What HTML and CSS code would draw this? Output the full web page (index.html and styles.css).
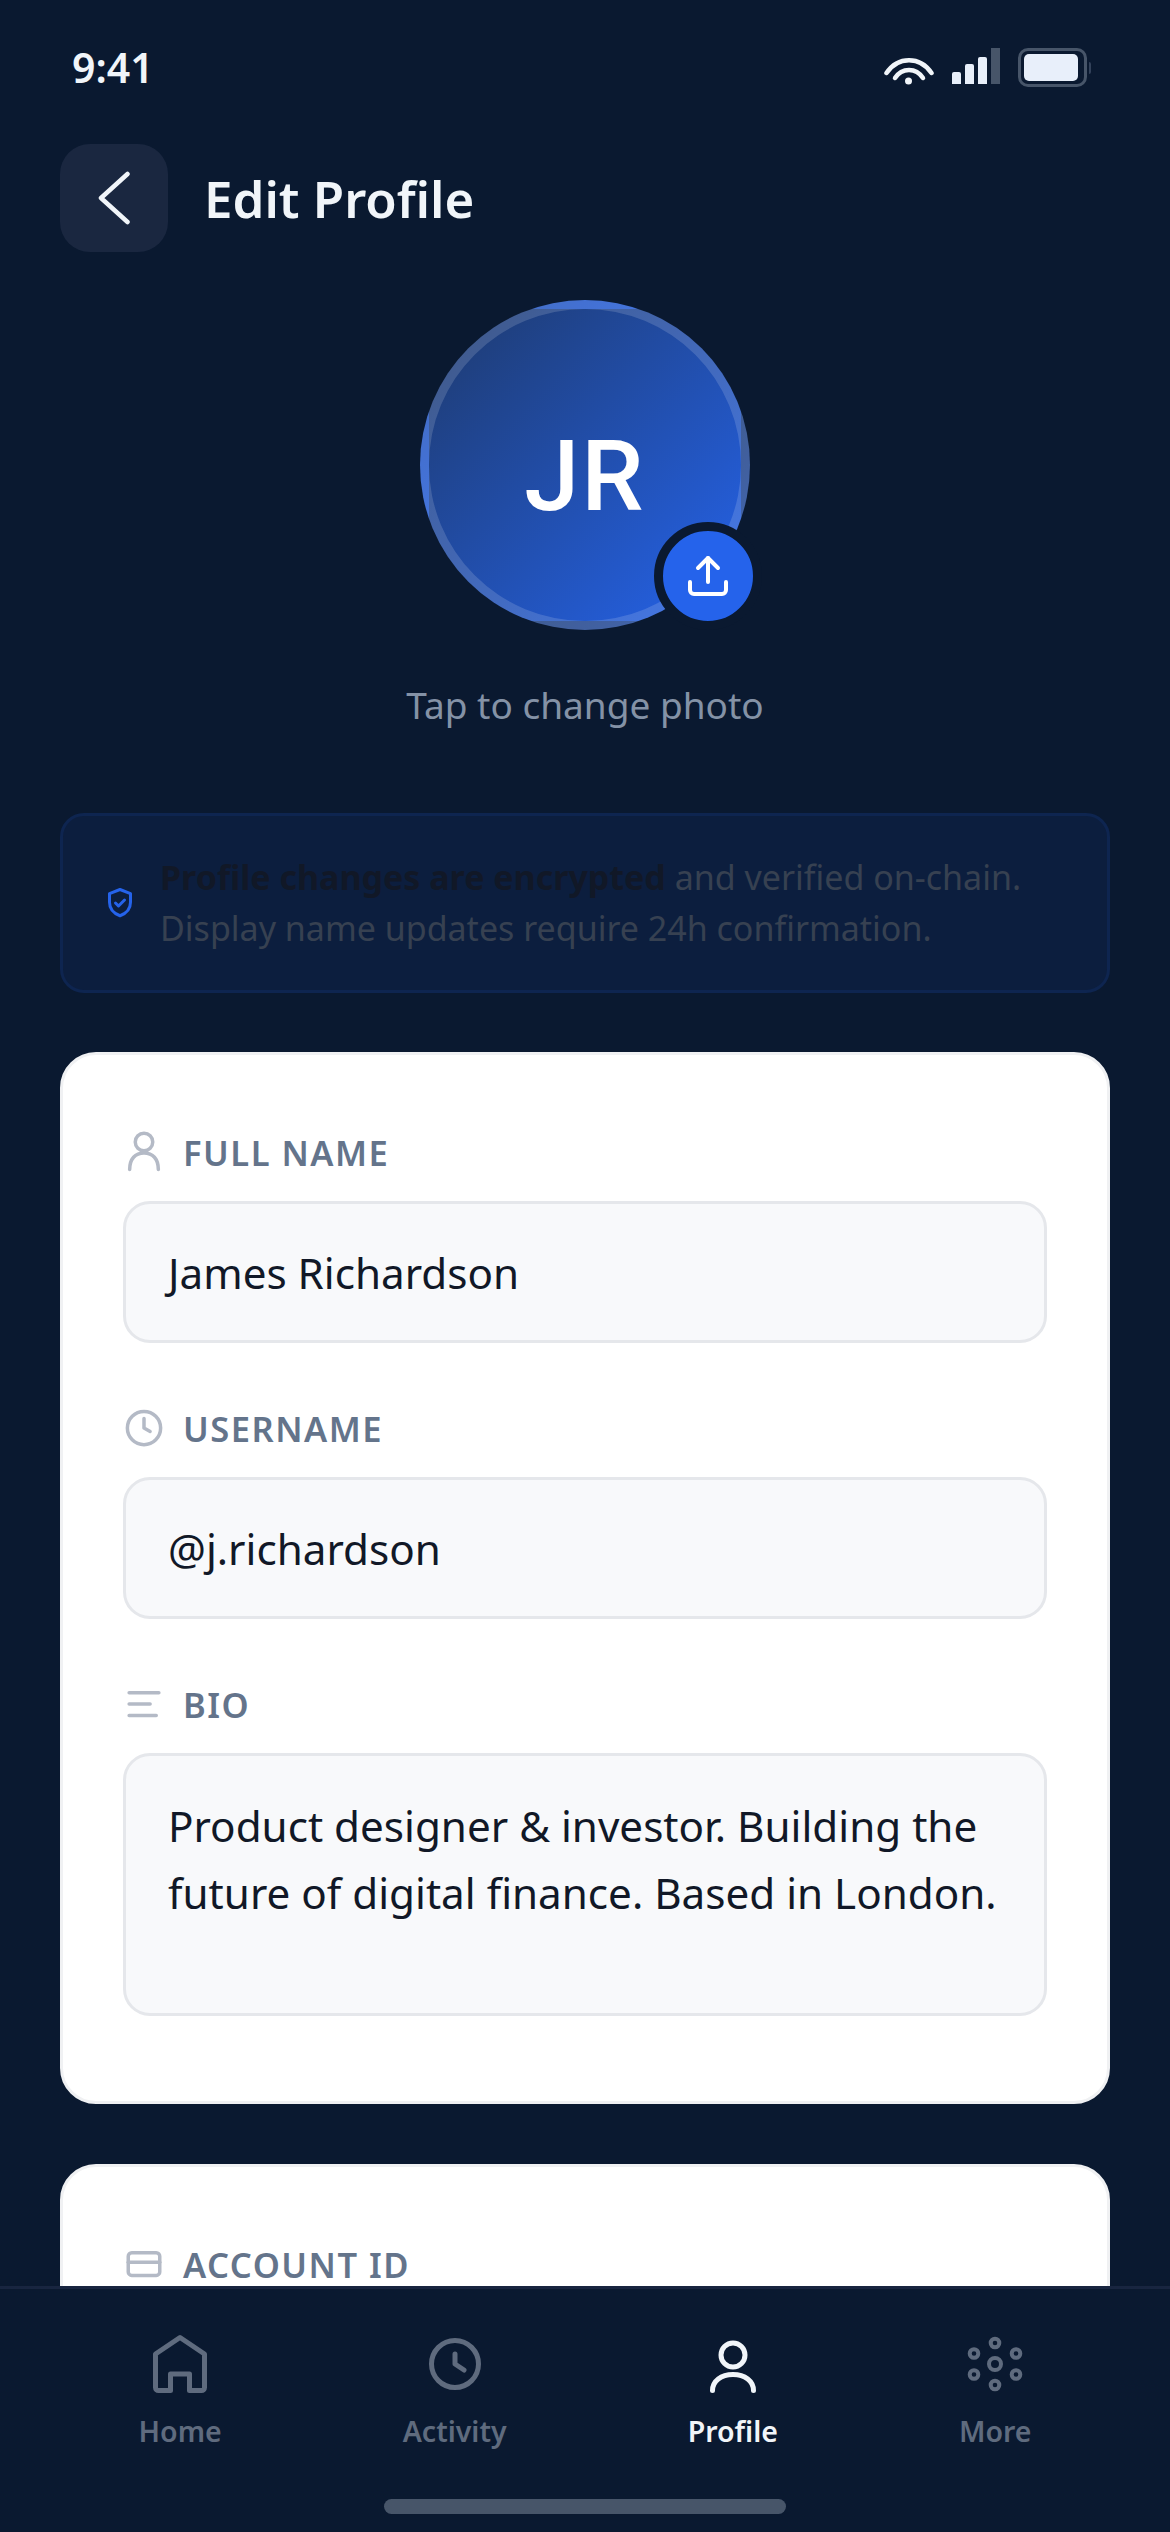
FILE: index.html
```html
<!DOCTYPE html>
<html lang="en">
<head>
  <meta charset="UTF-8">
  <meta name="viewport" content="width=device-width, initial-scale=1.0">
  <title>Edit Profile</title>
  <link rel="stylesheet" href="styles.css">
</head>
<body>
  <div class="screen">
    <div class="status-bar">
      <span class="time">9:41</span>
      <div class="status-icons">
        <svg class="wifi" viewBox="0 0 50 28" fill="none" stroke="#f1f5f9" stroke-width="4.500" stroke-linecap="round">
          <path d="M2.500 16C14 -1 36 -1 47.500 16"/>
          <path d="M11 21C18 10.300 32 10.300 39 21"/>
          <circle cx="24.500" cy="24" r="3.500" fill="#f1f5f9" stroke="none"/>
        </svg>
        <div class="signal">
          <span class="bar bar-1"></span>
          <span class="bar bar-2"></span>
          <span class="bar bar-3"></span>
          <span class="bar bar-4"></span>
        </div>
        <div class="battery"><span class="battery-fill"></span></div>
        <span class="battery-cap"></span>
      </div>
    </div>

    <div class="header">
      <div class="back-btn">
        <svg width="32" height="54" viewBox="0 0 32 54" fill="none" stroke="#f1f5f9" stroke-width="4.500" stroke-linecap="round" stroke-linejoin="round">
          <path d="M29.500 3 3 27l26.500 24"/>
        </svg>
      </div>
      <h1>Edit Profile</h1>
    </div>

    <div class="content">
      <div class="avatar-block">
        <div class="avatar">
          <span class="initials">JR</span>
          <div class="avatar-badge">
            <svg width="48" height="48" viewBox="0 0 24 24" fill="none" stroke="white" stroke-width="2" stroke-linecap="round" stroke-linejoin="round">
              <path d="M3 15v4a2 2 0 0 0 2 2h14a2 2 0 0 0 2-2v-4"/>
              <path d="M17 8l-5-5-5 5"/>
              <path d="M12 3v12"/>
            </svg>
          </div>
        </div>
        <p class="avatar-hint">Tap to change photo</p>
      </div>

      <div class="notice">
        <svg class="notice-icon" width="36" height="36" viewBox="0 0 24 24" fill="none" stroke="#2563eb" stroke-width="2" stroke-linecap="round" stroke-linejoin="round">
          <path d="M12 3l7 2.700v5.800c0 4.500-3 7.500-7 9-4-1.500-7-4.500-7-9V5.700z"/>
          <path d="m9 12 2 2 4-4"/>
        </svg>
        <p><strong>Profile changes are encrypted</strong> and verified on-chain. Display name updates require 24h confirmation.</p>
      </div>

      <div class="card">
        <div class="field">
          <label class="field-label">
            <svg class="field-icon" viewBox="0 0 24 24"><circle cx="12" cy="6.300" r="5"/><path d="M3.800 22C3.800 16 7 12.500 12 12.500S20.200 16 20.200 22"/></svg>
            Full Name
          </label>
          <div class="input">James Richardson</div>
        </div>
        <div class="field">
          <label class="field-label">
            <svg class="field-icon" viewBox="0 0 24 24"><circle cx="12" cy="12" r="9.500"/><path d="M12 6.500V12l3.500 2"/></svg>
            Username
          </label>
          <div class="input">@j.richardson</div>
        </div>
        <div class="field">
          <label class="field-label">
            <svg class="field-icon" viewBox="0 0 24 24"><path d="M3.500 5.500h17M3.500 12h12M3.500 18.500H19"/></svg>
            Bio
          </label>
          <div class="input input-area">Product designer &amp; investor. Building the future of digital finance. Based in London.</div>
        </div>
      </div>

      <div class="card">
        <div class="field">
          <label class="field-label">
            <svg class="field-icon" viewBox="0 0 24 24"><rect x="3" y="5.500" width="18" height="13" rx="2"/><path d="M3 11h18"/></svg>
            Account ID
          </label>
          <div class="input"></div>
        </div>
      </div>
    </div>

    <div class="tab-bar">
      <div class="tabs">
        <div class="tab">
          <svg class="tab-icon" viewBox="0 0 72 72"><path d="M36 9.500 60.500 26v33.500a3 3 0 0 1-3 3h-12V46h-19v16.500h-12a3 3 0 0 1-3-3V26z"/></svg>
          <span>Home</span>
        </div>
        <div class="tab">
          <svg class="tab-icon" viewBox="0 0 72 72"><circle cx="36" cy="36" r="23.500"/><path d="M36 26v10l9 6"/></svg>
          <span>Activity</span>
        </div>
        <div class="tab tab-active">
          <svg class="tab-icon" viewBox="0 0 72 72"><circle cx="36" cy="27" r="12"/><path d="M15.500 62.500C15.500 53 24 46.500 36 46.500S56.500 53 56.500 62.500"/></svg>
          <span>Profile</span>
        </div>
        <div class="tab">
          <svg class="tab-icon tab-icon-dots" viewBox="0 0 72 72">
            <circle cx="36" cy="36" r="6"/>
            <circle cx="36" cy="15" r="4.300"/><circle cx="36" cy="57" r="4.300"/>
            <circle cx="15" cy="25.500" r="4.300"/><circle cx="57" cy="25.500" r="4.300"/>
            <circle cx="15" cy="46.500" r="4.300"/><circle cx="57" cy="46.500" r="4.300"/>
          </svg>
          <span>More</span>
        </div>
      </div>
      <div class="home-indicator"></div>
    </div>
  </div>
</body>
</html>
```

FILE: styles.css
```css
* {
  box-sizing: border-box;
}

body {
  margin: 0;
  background-color: #0a1930;
  font-family: 'Noto Sans', 'Open Sans', sans-serif;
}

.screen {
  width: 1170px;
  height: 2532px;
  display: flex;
  flex-direction: column;
  overflow: hidden;
  background-color: #0a1930;
}

.status-bar {
  height: 144px;
  flex-shrink: 0;
  display: flex;
  justify-content: space-between;
  align-items: flex-start;
  padding: 42px 79px 0 72px;
}

.time {
  font-size: 41px;
  line-height: 50px;
  font-weight: 600;
  color: #f1f5f9;
}

.status-icons {
  display: flex;
  align-items: flex-start;
  padding-top: 6px;
}

.wifi {
  width: 50px;
  height: 28px;
  margin-top: 9px;
  margin-right: 18px;
}

.signal {
  display: flex;
  align-items: flex-end;
  gap: 4px;
  height: 36px;
  margin-right: 18px;
}

.bar {
  width: 9px;
  background-color: #e8effa;
  border-radius: 2px 2px 0 0;
}

.bar-1 { height: 12px; }
.bar-2 { height: 20px; }
.bar-3 { height: 27px; }
.bar-4 { height: 36px; background-color: #475569; border-radius: 0; }

.battery {
  width: 69px;
  height: 39px;
  padding: 3px 6px 3px 3px;
  border: 3px solid #475569;
  border-radius: 10px;
}

.battery-fill {
  display: block;
  height: 100%;
  background-color: #e8effa;
  border-radius: 5px;
}

.battery-cap {
  width: 2px;
  height: 12px;
  margin: 14px 0 0 2px;
  background-color: #33425a;
  border-radius: 0 2px 2px 0;
}

.header {
  flex-shrink: 0;
  display: flex;
  align-items: center;
  gap: 36px;
  padding: 0 60px;
}

.back-btn {
  width: 108px;
  height: 108px;
  display: flex;
  align-items: center;
  justify-content: center;
  background-color: #1a2740;
  border-radius: 30px;
}

h1 {
  margin: 0;
  font-size: 51px;
  font-weight: 600;
  color: #f1f5f9;
}

.content {
  flex: 1;
  min-height: 0;
  overflow: hidden;
  padding: 48px 60px 0;
}

.avatar-block {
  display: flex;
  flex-direction: column;
  align-items: center;
  margin-bottom: 82px;
}

.avatar {
  position: relative;
  width: 330px;
  height: 330px;
  display: flex;
  align-items: center;
  justify-content: center;
  border: 9px solid rgba(255, 255, 255, 0.15);
  border-radius: 50%;
  background: linear-gradient(135deg, #1e3a6e, #2563eb);
  color: white;
}

.initials {
  padding-top: 22px;
  font-family: Roboto, sans-serif;
  font-size: 99px;
  font-weight: 500;
  letter-spacing: 2px;
}

.avatar-badge {
  position: absolute;
  right: -21px;
  bottom: -9px;
  width: 108px;
  height: 108px;
  display: flex;
  align-items: center;
  justify-content: center;
  background-color: #2563eb;
  border: 9px solid #0a1930;
  border-radius: 50%;
}

.avatar-hint {
  margin: 49px 0 0;
  font-size: 37px;
  line-height: 52px;
  color: #8492a6;
}

.notice {
  height: 180px;
  display: flex;
  align-items: center;
  gap: 22px;
  padding: 0 48px 0 39px;
  margin-bottom: 59px;
  background-color: #0c1e3e;
  border: 3px solid #0e2550;
  border-radius: 24px;
}

.notice-icon {
  flex-shrink: 0;
}

.notice p {
  margin: 0;
  font-size: 34px;
  line-height: 51px;
  color: #374151;
}

.notice strong {
  color: #111827;
  font-weight: 700;
}

.card {
  background-color: white;
  border: 3px solid #f0f1f3;
  border-radius: 36px;
  padding: 67px 60px 30px;
  margin-bottom: 60px;
}

.field {
  margin-bottom: 55px;
}

.field-label {
  display: flex;
  align-items: center;
  gap: 18px;
  height: 60px;
  margin-bottom: 19px;
  font-size: 34.500px;
  font-weight: 600;
  letter-spacing: 1.500px;
  text-transform: uppercase;
  color: #64748b;
}

.field-icon {
  width: 42px;
  height: 42px;
  flex-shrink: 0;
  fill: none;
  stroke: #b4bac6;
  stroke-width: 2;
  stroke-linecap: round;
  stroke-linejoin: round;
}

.input {
  height: 142px;
  display: flex;
  align-items: center;
  padding: 0 40px 0 42px;
  background-color: #f8f9fb;
  border: 3px solid #e5e7eb;
  border-radius: 27px;
  font-size: 42.200px;
  color: #111827;
}

.input-area {
  height: 263px;
  align-items: flex-start;
  padding-top: 36px;
  line-height: 67px;
}

.tab-bar {
  height: 246px;
  flex-shrink: 0;
  display: flex;
  flex-direction: column;
  padding-top: 39px;
  border-top: 3px solid #182540;
  background-color: #0a1930;
}

.tabs {
  display: flex;
  justify-content: space-around;
  padding: 0 48px;
}

.tab {
  display: flex;
  flex-direction: column;
  align-items: center;
  gap: 10px;
  font-size: 28.500px;
  line-height: 42px;
  font-weight: 600;
  color: #5f6b7e;
}

.tab-icon {
  width: 72px;
  height: 72px;
  fill: none;
  stroke: #5f6b7e;
  stroke-width: 5;
  stroke-linecap: round;
  stroke-linejoin: round;
}

.tab-icon-dots {
  stroke-width: 4;
}

.tab-active {
  color: #f1f5f9;
}

.tab-active .tab-icon {
  stroke: #f1f5f9;
}

.home-indicator {
  width: 402px;
  height: 15px;
  margin: auto auto 18px;
  background-color: #475569;
  border-radius: 8px;
}
```
